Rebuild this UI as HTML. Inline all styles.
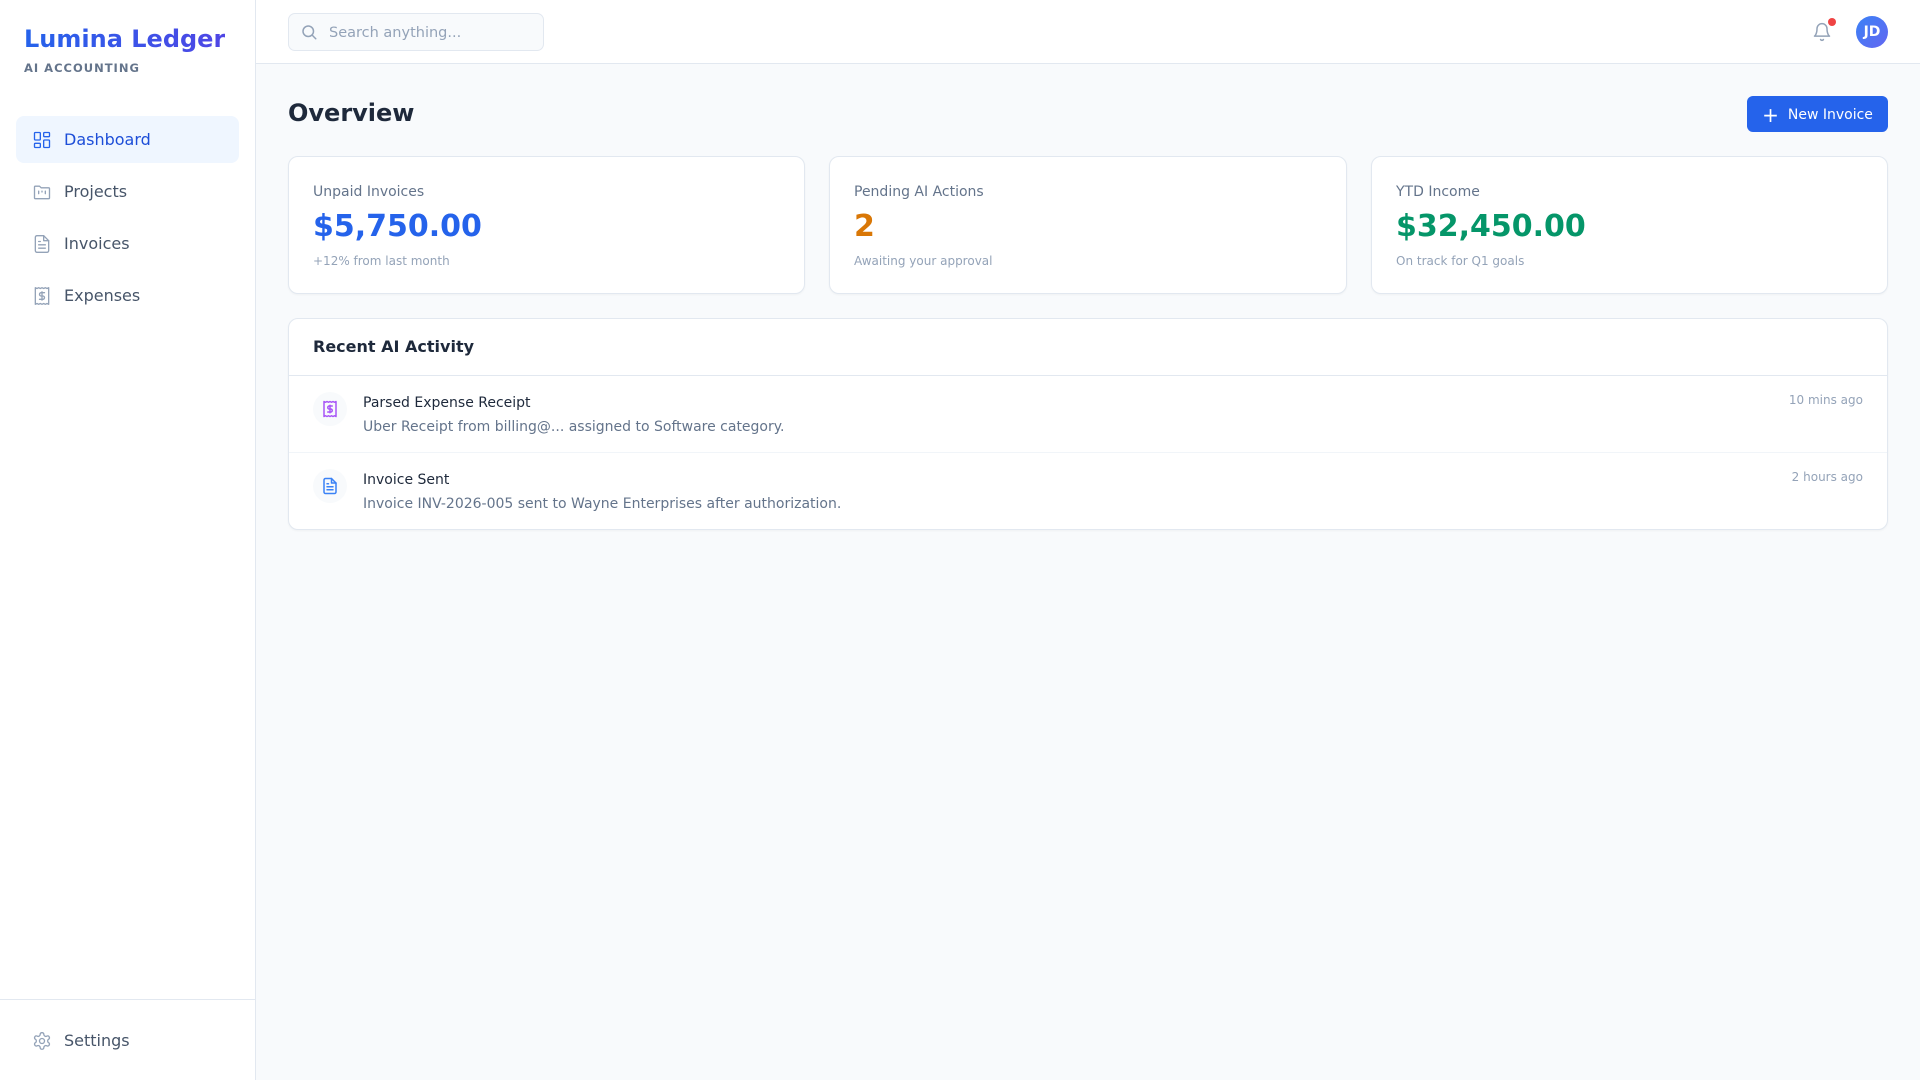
<!DOCTYPE html>
<html><head><meta charset="utf-8"><style>
*{box-sizing:border-box;margin:0;padding:0}
body{width:1920px;height:1080px;font-family:"DejaVu Sans","Liberation Sans",sans-serif;background:#f8fafc;position:relative;overflow:hidden;color:#1e293b}
.side{position:absolute;left:0;top:0;width:256px;height:1080px;background:#fff;border-right:1px solid #e2e8f0}
.logo{position:absolute;left:24px;top:25px;font-size:24px;font-weight:bold;background:linear-gradient(90deg,#2563eb,#4f46e5);-webkit-background-clip:text;color:transparent}
.sub{position:absolute;left:24px;top:61px;font-size:11.5px;font-weight:bold;color:#64748b;letter-spacing:1px}
.nav{position:absolute;left:16px;width:223px;height:47px;border-radius:8px;display:flex;align-items:center;padding-left:16px;font-size:16px;color:#475569}
.nav svg{width:20px;height:20px;margin-right:12px;fill:none;stroke:#94a3b8;stroke-width:1.6;stroke-linecap:round;stroke-linejoin:round}
.nav.act{background:#eff6ff;color:#1d4ed8}
.nav.act svg{stroke:#2563eb}
.bot{position:absolute;left:0;top:999px;width:255px;border-top:1px solid #e2e8f0}
.top{position:absolute;left:256px;top:0;right:0;height:64px;background:#fff;border-bottom:1px solid #e2e8f0}
.search{position:absolute;left:32px;top:13px;width:256px;height:38px;border:1px solid #e2e8f0;border-radius:7px;background:#f8fafc;font-size:14.5px;color:#94a3b8;padding:11px 0 0 40px}
.search svg{position:absolute;left:11px;top:9px}
h1{position:absolute;left:288px;top:99px;font-size:24px;font-weight:bold;color:#1e293b}
.btn{position:absolute;left:1747px;top:96px;width:141px;height:36px;background:#2563eb;border-radius:6px;color:#fff;font-size:14px;display:flex;align-items:center;justify-content:center;gap:9px;padding-top:1px}
.card{position:absolute;top:156px;height:138px;background:#fff;border:1px solid #e2e8f0;border-radius:10px;box-shadow:0 1px 2px rgba(0,0,0,.04);padding:0 24px}
.card .l{position:absolute;left:24px;top:27px;font-size:14px;color:#64748b}
.card .v{position:absolute;left:24px;top:52px;font-size:30px;font-weight:bold}
.card .s{position:absolute;left:24px;top:97px;font-size:12px;color:#94a3b8}
.panel{position:absolute;left:288px;top:318px;width:1600px;height:212px;background:#fff;border:1px solid #e2e8f0;border-radius:10px;box-shadow:0 1px 2px rgba(0,0,0,.04)}
.ph{height:57px;border-bottom:1px solid #e2e8f0;padding:18px 0 0 24px;font-size:16px;font-weight:bold;color:#1e293b}
.row{position:relative;height:77px;border-bottom:1px solid #f1f5f9}
.row:last-child{border:none}
.ic{position:absolute;left:24px;top:16px;width:34px;height:34px;border-radius:50%;background:#f8fafc;display:flex;align-items:center;justify-content:center}
.rt{position:absolute;left:74px;top:19px;font-size:14px;color:#1e293b}
.rd{position:absolute;left:74px;top:43px;font-size:14px;color:#64748b}
.tm{position:absolute;right:24px;top:17px;font-size:12px;color:#94a3b8}
</style></head><body>
<div class="side">
<div class="logo">Lumina Ledger</div>
<div class="sub">AI ACCOUNTING</div>
<div class="nav act" style="top:116px"><svg viewBox="0 0 24 24"><rect x="3" y="3" width="7" height="9" rx="1"/><rect x="14" y="3" width="7" height="5" rx="1"/><rect x="14" y="12" width="7" height="9" rx="1"/><rect x="3" y="16" width="7" height="5" rx="1"/></svg>Dashboard</div>
<div class="nav" style="top:168px"><svg viewBox="0 0 24 24"><path d="M3 6a1 1 0 0 1 1-1h5l2 2h9a1 1 0 0 1 1 1v11a1 1 0 0 1-1 1H4a1 1 0 0 1-1-1z"/><path d="M8 11v3M12 11v1M16 11v3"/></svg>Projects</div>
<div class="nav" style="top:220px"><svg viewBox="0 0 24 24"><path d="M14 2H6a2 2 0 0 0-2 2v16a2 2 0 0 0 2 2h12a2 2 0 0 0 2-2V8z"/><path d="M14 2v6h6M8 13h8M8 17h8M8 9h2"/></svg>Invoices</div>
<div class="nav" style="top:272px"><svg viewBox="0 0 24 24"><path d="M4 2v20l2-1 2 1 2-1 2 1 2-1 2 1 2-1 2 1V2l-2 1-2-1-2 1-2-1-2 1-2-1-2 1z"/><path d="M15 8h-4a2 2 0 0 0 0 4h2a2 2 0 0 1 0 4H9M12 17V7"/></svg>Expenses</div>
<div class="bot"><div class="nav" style="top:17px"><svg viewBox="0 0 24 24"><circle cx="12" cy="12" r="3"/><path d="M12.2 2h-.4a2 2 0 0 0-2 2v.2a2 2 0 0 1-1 1.7l-.4.3a2 2 0 0 1-2 0l-.2-.1a2 2 0 0 0-2.7.7l-.2.4a2 2 0 0 0 .7 2.7l.2.1a2 2 0 0 1 1 1.7v.5a2 2 0 0 1-1 1.7l-.2.1a2 2 0 0 0-.7 2.7l.2.4a2 2 0 0 0 2.7.7l.2-.1a2 2 0 0 1 2 0l.4.3a2 2 0 0 1 1 1.7v.2a2 2 0 0 0 2 2h.4a2 2 0 0 0 2-2v-.2a2 2 0 0 1 1-1.7l.4-.3a2 2 0 0 1 2 0l.2.1a2 2 0 0 0 2.7-.7l.2-.4a2 2 0 0 0-.7-2.7l-.2-.1a2 2 0 0 1-1-1.7v-.5a2 2 0 0 1 1-1.7l.2-.1a2 2 0 0 0 .7-2.7l-.2-.4a2 2 0 0 0-2.7-.7l-.2.1a2 2 0 0 1-2 0l-.4-.3a2 2 0 0 1-1-1.7V4a2 2 0 0 0-2-2z"/></svg>Settings</div></div>
</div>
<div class="top">
<div class="search"><svg width="18" height="18" viewBox="0 0 24 24" fill="none" stroke="#94a3b8" stroke-width="2" stroke-linecap="round"><circle cx="11" cy="11" r="7"/><path d="M21 21l-4.3-4.3"/></svg>Search anything...</div>
<svg style="position:absolute;left:1556px;top:21px" width="20" height="22" viewBox="0 0 24 24" fill="none" stroke="#94a3b8" stroke-width="1.8" stroke-linecap="round" stroke-linejoin="round"><path d="M6 8a6 6 0 0 1 12 0c0 7 3 9 3 9H3s3-2 3-9"/><path d="M10.3 21a1.9 1.9 0 0 0 3.4 0"/></svg>
<div style="position:absolute;left:1572px;top:18px;width:8px;height:8px;border-radius:50%;background:#ef4444"></div>
<div style="position:absolute;left:1600px;top:16px;width:32px;height:32px;border-radius:50%;background:linear-gradient(135deg,#3b82f6,#6366f1);color:#fff;font-size:14px;font-weight:bold;display:flex;align-items:center;justify-content:center">JD</div>
</div>
<h1>Overview</h1>
<div class="btn"><span style="font-size:20px;line-height:1">+</span>New Invoice</div>
<div class="card" style="left:288px;width:517px"><div class="l">Unpaid Invoices</div><div class="v" style="color:#2563eb">$5,750.00</div><div class="s">+12% from last month</div></div>
<div class="card" style="left:829px;width:518px"><div class="l">Pending AI Actions</div><div class="v" style="color:#d97706">2</div><div class="s">Awaiting your approval</div></div>
<div class="card" style="left:1371px;width:517px"><div class="l">YTD Income</div><div class="v" style="color:#059669">$32,450.00</div><div class="s">On track for Q1 goals</div></div>
<div class="panel">
<div class="ph">Recent AI Activity</div>
<div class="row"><div class="ic"><svg width="18" height="18" viewBox="0 0 24 24" fill="none" stroke="#a855f7" stroke-width="2" stroke-linecap="round" stroke-linejoin="round"><path d="M4 2v20l2-1 2 1 2-1 2 1 2-1 2 1 2-1 2 1V2l-2 1-2-1-2 1-2-1-2 1-2-1-2 1z"/><path d="M15 8h-4a2 2 0 0 0 0 4h2a2 2 0 0 1 0 4H9M12 17V7"/></svg></div><div class="rt">Parsed Expense Receipt</div><div class="rd">Uber Receipt from billing@... assigned to Software category.</div><div class="tm">10 mins ago</div></div>
<div class="row"><div class="ic"><svg width="18" height="18" viewBox="0 0 24 24" fill="none" stroke="#3b82f6" stroke-width="2" stroke-linecap="round" stroke-linejoin="round"><path d="M14 2H6a2 2 0 0 0-2 2v16a2 2 0 0 0 2 2h12a2 2 0 0 0 2-2V8z"/><path d="M14 2v6h6M8 13h8M8 17h8M8 9h2"/></svg></div><div class="rt">Invoice Sent</div><div class="rd">Invoice INV-2026-005 sent to Wayne Enterprises after authorization.</div><div class="tm">2 hours ago</div></div>
</div>
</body></html>
